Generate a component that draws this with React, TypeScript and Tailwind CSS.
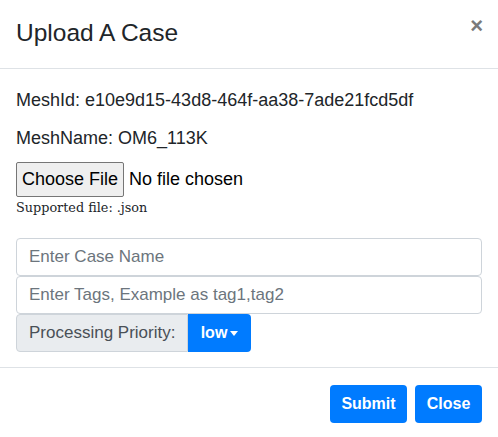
export default function App() {
  return (
    <div className="h-[437px] w-[498px] bg-white font-['Liberation_Sans',Arial,sans-serif] text-[#212529]">
      <div className="flex h-[69px] items-start justify-between border-b border-[#dee2e6] px-4 pt-[15px]">
        <h5 className="text-[24.5px] leading-[36px]">Upload A Case</h5>
        <button className="mt-[0px] mr-[-1px] text-[22px] font-bold leading-none text-[#7a7a7a]">×</button>
      </div>

      <div className="px-4 pt-[19px] pb-[15px]">
        <p className="text-[18px] leading-6">MeshId: e10e9d15-43d8-464f-aa38-7ade21fcd5df</p>
        <p className="mt-[14px] text-[18px] leading-6">MeshName: OM6_113K</p>
        <div className="mt-[12px] flex items-center">
          <button className="h-[35px] w-[108px] rounded-[2px] border border-[#767676] bg-[#efefef] text-[18px] text-black">
            Choose File
          </button>
          <span className="ml-[5px] text-[18px] text-black">No file chosen</span>
        </div>
        <div className="mt-[2px] font-['DejaVu_Serif',serif] text-[12.8px] leading-[18px] text-[#212529]">
          Supported file: .json
        </div>

        <div className="mt-[21px] flex flex-col">
          <input
            className="h-[38px] rounded-[4px] border border-[#ced4da] px-3 text-[17px] placeholder:text-[#6c757d]"
            placeholder="Enter Case Name"
          />
          <input
            className="h-[38px] rounded-[4px] border border-[#ced4da] px-3 text-[17px] placeholder:text-[#6c757d]"
            placeholder="Enter Tags, Example as tag1,tag2"
          />
          <div className="flex h-[38px]">
            <span className="flex w-[172px] shrink-0 items-center whitespace-nowrap rounded-l-[4px] border border-[#ced4da] bg-[#e9ecef] px-3 text-[17px] text-[#495057]">
              Processing Priority:
            </span>
            <button className="flex w-[63px] items-center justify-center gap-[3px] rounded-r-[4px] bg-[#007bff] text-[16px] font-bold text-white">
              low
              <span className="mt-[1px] h-0 w-0 border-x-[4px] border-t-[5px] border-x-transparent border-t-white" />
            </button>
          </div>
        </div>
      </div>

      <div className="flex justify-end gap-2 border-t border-[#dee2e6] px-4 pt-[17px]">
        <button className="h-[38px] w-[77px] rounded-[4px] bg-[#007bff] text-[16px] font-bold text-white">Submit</button>
        <button className="h-[38px] w-[67px] rounded-[4px] bg-[#007bff] text-[16px] font-bold text-white">Close</button>
      </div>
    </div>
  );
}
